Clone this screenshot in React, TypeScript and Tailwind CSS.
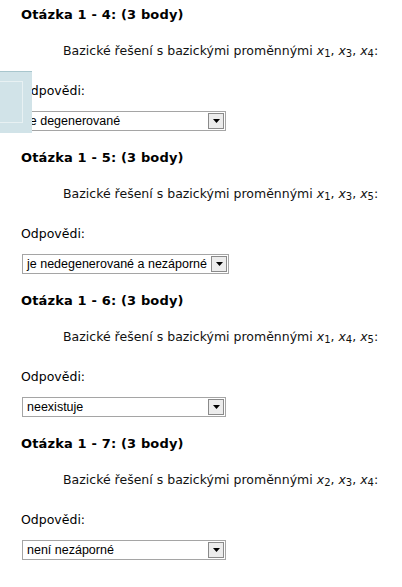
import React from "react";

type Q = { n: number; subs: [number, number, number]; answer: string };

const questions: Q[] = [
  { n: 4, subs: [1, 3, 4], answer: "je degenerované" },
  { n: 5, subs: [1, 3, 5], answer: "je nedegenerované a nezáporné" },
  { n: 6, subs: [1, 4, 5], answer: "neexistuje" },
  { n: 7, subs: [2, 3, 4], answer: "není nezáporné" },
];

function X({ i }: { i: number }) {
  return (
    <span>
      <i>x</i>
      <sub className="text-[10px] relative top-[2px] align-baseline">{i}</sub>
    </span>
  );
}

function Select({ value }: { value: string }) {
  return (
    <div className="inline-flex h-[20px] min-w-[204px] items-stretch border border-[#a5a5a5] bg-white">
      <div
        className="flex-1 pl-[4px] pr-[3px] text-[12.5px] leading-[18px] whitespace-nowrap text-[#000]"
        style={{ fontFamily: '"Liberation Sans", Arial, sans-serif' }}
      >
        {value}
      </div>
      <div className="m-[1px] flex w-[16px] items-center justify-center border border-[#8a8a8a] bg-[#ececec]">
        <svg width="7" height="4" viewBox="0 0 7 4">
          <polygon points="0,0 7,0 3.5,4" fill="#000" />
        </svg>
      </div>
    </div>
  );
}

export default function App() {
  return (
    <div
      className="relative w-[402px] h-[587px] overflow-hidden bg-white text-[#000]"
      style={{ fontFamily: '"DejaVu Sans", Verdana, sans-serif' }}
    >
      <div className="pl-[21px] pt-[7px]">
        {questions.map((q) => (
          <div key={q.n} className="mb-[19px]">
            <div className="text-[13px] font-bold leading-[16px] tracking-[0.15px]">
              Otázka 1 - {q.n}: (3 body)
            </div>
            <div className="mt-[20px] pl-[42px] text-[12.5px] leading-[16px] text-[#111]">
              Bazické řešení s bazickými proměnnými <X i={q.subs[0]} />, <X i={q.subs[1]} />,{" "}
              <X i={q.subs[2]} />:
            </div>
            <div className="mt-[24px] text-[12.5px] leading-[16px]">Odpovědi:</div>
            <div className="mt-[12px] flex pl-[1px]">
              <Select value={q.answer} />
            </div>
          </div>
        ))}
      </div>
      <div className="absolute left-0 top-[71px] h-[62px] w-[32px] border-t border-[#a8c6cd] bg-[#d1e3e8]">
        <div className="mt-[9px] h-[42px] w-[23px] border border-l-0 border-[#e8f1f3]" />
      </div>
    </div>
  );
}
